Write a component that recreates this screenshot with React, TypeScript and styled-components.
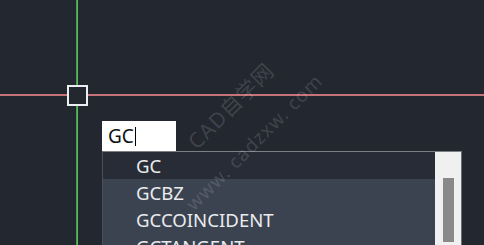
import React from "react";
import styled, { createGlobalStyle } from "styled-components";

const Global = createGlobalStyle`
  html, body { margin: 0; padding: 0; background: #222730; }
  #root { width: 484px; height: 245px; }
`;

const Canvas = styled.div`
  position: relative;
  width: 484px;
  height: 245px;
  overflow: hidden;
  background: #222730;
  font-family: "Noto Sans", "Open Sans", sans-serif;
`;

const VLine = styled.div`
  position: absolute;
  left: 76px;
  top: 0;
  width: 2px;
  height: 245px;
  background: linear-gradient(to right, #3f8f45, #62c862);
`;

const HLine = styled.div`
  position: absolute;
  left: 0;
  top: 94px;
  width: 484px;
  height: 2px;
  background: #c4737a;
`;

const PickBox = styled.div`
  position: absolute;
  left: 67px;
  top: 85px;
  width: 17px;
  height: 17px;
  border: 2px solid #eceff2;
  background: #222730;
`;

const Watermark = styled.div<{ $x: number; $y: number; $size: number }>`
  position: absolute;
  left: ${(p) => p.$x}px;
  top: ${(p) => p.$y}px;
  transform: translate(-50%, -50%) rotate(-45deg);
  white-space: nowrap;
  font-family: "Noto Sans", "Noto Sans CJK SC", sans-serif;
  font-size: ${(p) => p.$size}px;
  color: rgba(255, 255, 255, 0.15);
  letter-spacing: 1px;
  pointer-events: none;
`;

const Popup = styled.div`
  position: absolute;
  left: 102px;
  top: 121px;
  display: flex;
  flex-direction: column;
  align-items: flex-start;
`;

const InputBox = styled.div`
  width: 74px;
  height: 30px;
  box-sizing: border-box;
  background: #ffffff;
  display: flex;
  align-items: center;
  padding-left: 6px;
  font-size: 19px;
  color: #111;
`;

const Caret = styled.span`
  display: inline-block;
  width: 1px;
  height: 19px;
  margin-left: 1px;
  background: #000;
`;

const List = styled.div`
  width: 360px;
  height: 100px;
  box-sizing: border-box;
  border-top: 1px solid #7c7f84;
  border-left: 1px solid #4a4f58;
  border-right: 1px solid #6c6f74;
  display: flex;
  overflow: hidden;
`;

const Items = styled.div`
  flex: 1;
  display: flex;
  flex-direction: column;
  background: #3b4250;
`;

const Item = styled.div<{ $first?: boolean }>`
  height: 27px;
  flex: none;
  display: flex;
  align-items: center;
  padding-left: 33px;
  font-size: 18.6px;
  color: #e9ebee;
  background: ${(p) => (p.$first ? "#272c36" : "#3b4250")};
`;

const Scroll = styled.div`
  width: 26px;
  background: #f0f0f0;
  display: flex;
  justify-content: center;
  padding-top: 26px;
  box-sizing: border-box;
`;

const Thumb = styled.div`
  width: 11px;
  height: 64px;
  background: #898989;
`;

const items = ["GC", "GCBZ", "GCCOINCIDENT", "GCTANGENT"];

export default function App() {
  return (
    <Canvas>
      <Global />
      <VLine />
      <HLine />
      <PickBox />
      <Popup>
        <InputBox>
          GC<Caret />
        </InputBox>
        <List>
          <Items>
            {items.map((t, i) => (
              <Item key={t} $first={i === 0}>
                {t}
              </Item>
            ))}
          </Items>
          <Scroll>
            <Thumb />
          </Scroll>
        </List>
      </Popup>
      <Watermark $x={230} $y={105} $size={21}>CAD自学网</Watermark>
      <Watermark $x={254} $y={142} $size={19}>www. cadzxw. com</Watermark>
    </Canvas>
  );
}
